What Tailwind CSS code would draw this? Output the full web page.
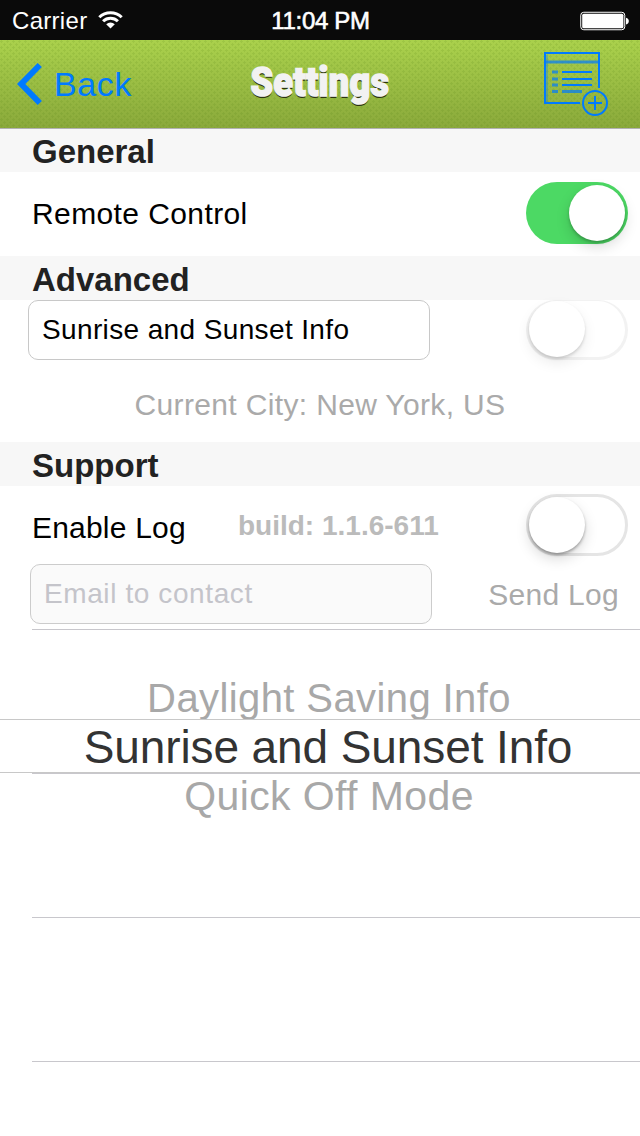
<!DOCTYPE html>
<html lang="en">
<head>
    <meta charset="UTF-8">
    <meta name="viewport" content="width=device-width, initial-scale=1.0">
    <title>Settings</title>
    <script src="https://cdn.jsdelivr.net/npm/@tailwindcss/browser@4"></script>
</head>
<body class="bg-white text-black font-['Liberation_Sans',Arial,sans-serif]">
    <div class="w-[640px] h-[1136px] overflow-hidden flex flex-col">
        <!-- Status bar -->
        <div class="h-10 shrink-0 bg-[#0a0a0a] text-white text-2xl leading-10 grid grid-cols-3 pl-3 pr-[11px]">
            <div class="flex items-center">
                <span class="tracking-[0.3px]">Carrier</span>
                <svg class="ml-[11px] -mt-px" width="25" height="18" viewBox="0 0 25 18" fill="none" stroke="#fff" stroke-width="3">
                    <path d="M1.3 6.2a16 16 0 0 1 22.4 0"/>
                    <path d="M5.1 10.2a10.5 10.5 0 0 1 14.8 0"/>
                    <path d="M8.2 13.3a6.1 6.1 0 0 1 8.6 0L12.5 17.6z" fill="#fff" stroke="none"/>
                </svg>
            </div>
            <span class="text-center pt-px tracking-[-0.3px] [-webkit-text-stroke:0.6px_white]">11:04 PM</span>
            <div class="flex items-center justify-end">
                <svg width="49" height="20" viewBox="0 0 49 20">
                    <rect x="0.75" y="1.25" width="44" height="17.5" rx="3" fill="none" stroke="#fff" stroke-width="1"/>
                    <rect x="2.2" y="2.7" width="41.2" height="14.6" rx="1.5" fill="#fff"/>
                    <path d="M46 6.7c2 .5 2.800 1.700 2.800 3.400s-.8 2.900-2.800 3.400z" fill="#fff"/>
                </svg>
            </div>
        </div>

        <!-- Navigation bar -->
        <header class="relative h-[88px] shrink-0 grid grid-cols-3 items-center pl-4 pr-8 bg-linear-to-b from-[#aad14c] to-[#8aa93b]">
            <svg class="absolute inset-0" width="640" height="88">
                <defs>
                    <pattern id="weave" width="6" height="6" patternUnits="userSpaceOnUse">
                        <path d="M0 1H3V2H0zM1 0H2V3H1zM3 4H6V5H3zM4 3H5V6H4z" fill="#4f7a10" fill-opacity="0.13"/>
                    </pattern>
                </defs>
                <rect width="640" height="88" fill="url(#weave)"/>
            </svg>
            <a href="#" class="relative flex items-center text-[#007aff]">
                <svg width="27" height="44" viewBox="0 0 27 44" fill="none" stroke="#007aff" stroke-width="6">
                    <path d="M23.800 3L5.200 22L23.800 41"/>
                </svg>
                <span class="ml-[11px] text-[34px] leading-10 tracking-[0.6px]">Back</span>
            </a>
            <h1 class="relative justify-self-center ml-4 -mt-1 text-[41px] leading-[48px] font-black font-['Roboto','Liberation_Sans',sans-serif] scale-x-[0.88] tracking-[0.3px] text-[#f2f2f2] [-webkit-text-stroke:1.6px_#f2f2f2] [text-shadow:0_2px_0_#2b3310]">Settings</h1>
            <svg class="relative justify-self-end" width="66" height="66" viewBox="0 0 66 66" fill="none" stroke="#007aff" stroke-width="2">
                <path d="M38 52H3V2H57V37"/>
                <path d="M3 11H57" stroke-width="3" stroke-opacity="0.7"/>
                <path d="M5 4V51" stroke-opacity="0.3"/>
                <path d="M20 21H50M20 28H50M20 34H50"/>
                <path d="M20 40.500H40" stroke-width="3" stroke-opacity="0.7"/>
                <path d="M10 21H16M10 28H16M10 34H16M10 40.500H16" stroke-width="3" stroke-opacity="0.7"/>
                <circle cx="53" cy="52" r="12"/>
                <path d="M53 45V59M46 52H60"/>
            </svg>
        </header>

        <main class="flex flex-col">
            <h2 class="h-11 bg-[#f7f7f7] border-t border-[#b2b2b2] pl-8 text-[33px] leading-[45px] font-bold text-[#222]">General</h2>
            <div class="h-[84px] pl-8 pr-3 flex items-center justify-between">
                <span class="-mt-0.5 text-[30px] tracking-[0.4px]">Remote Control</span>
                <button class="w-[102px] h-[62px] -mt-0.5 rounded-full bg-[#4cd964] flex items-center justify-end pr-[3px]" aria-label="Remote Control">
                    <span class="size-14 rounded-full bg-white shadow-[0_6px_14px_rgba(0,0,0,0.15),0_2px_3px_rgba(0,0,0,0.22)]"></span>
                </button>
            </div>

            <h2 class="h-11 bg-[#f7f7f7] pl-8 text-[33px] leading-[47px] font-bold text-[#222]">Advanced</h2>
            <div class="h-[142px]">
                <div class="h-15 pl-7 pr-3 flex justify-between">
                    <div class="w-[402px] h-15 border border-[#c8c8c8] rounded-[10px] pl-[13px] text-[28px] leading-[57px] tracking-[0.37px]">Sunrise and Sunset Info</div>
                    <button class="w-[102px] h-15 rounded-full border-[3px] border-t-1 border-[#f2f2f2] flex items-center" aria-label="Sunrise and Sunset Info">
                        <span class="size-14 shrink-0 rounded-full bg-white shadow-[0_6px_14px_rgba(0,0,0,0.08),0_2px_3px_rgba(0,0,0,0.15)]"></span>
                    </button>
                </div>
                <p class="mt-[27px] text-center text-[30px] leading-9 tracking-[0.35px] text-[#aaa]">Current City: New York, US</p>
            </div>

            <h2 class="h-11 bg-[#f7f7f7] pl-8 text-[33px] leading-[47px] font-bold text-[#222]">Support</h2>
            <div class="h-[78px] pl-8 pr-3 flex items-center">
                <span class="mt-1 w-[206px] text-[30px] tracking-[0.2px]">Enable Log</span>
                <span class="mt-0.5 text-[28px] font-bold text-[#bbb]">build: 1.1.6-611</span>
                <button class="ml-auto w-[102px] h-[62px] rounded-full border-[3px] border-[#e5e5e5] flex items-center" aria-label="Enable Log">
                    <span class="size-14 shrink-0 rounded-full bg-white shadow-[0_6px_14px_rgba(0,0,0,0.15),0_2px_3px_rgba(0,0,0,0.3)]"></span>
                </button>
            </div>
            <div class="h-[65px] pl-[30px] pr-[21px] flex justify-between">
                <div class="w-[402px] h-15 border border-[#ccc] rounded-[10px] bg-[#fafafa] pl-[13px] text-[28px] leading-[57px] tracking-[0.6px] text-[#c4c4ca]">Email to contact</div>
                <span class="text-[30px] leading-[61px] tracking-[0.3px] text-[#aaa]">Send Log</span>
            </div>
        </main>

        <!-- Picker over the empty table rows -->
        <section class="relative h-[507px] shrink-0">
            <div class="ml-8 h-36 border-t border-[#c8c7cc]"></div>
            <div class="ml-8 h-36 border-t border-[#c8c7cc]"></div>
            <div class="ml-8 h-36 border-t border-[#c8c7cc]"></div>
            <div class="ml-8 h-[75px] border-t border-[#c8c7cc]"></div>
            <div class="absolute inset-x-0 top-[46px] flex flex-col items-center whitespace-nowrap">
                <span class="h-11 pl-[18px] text-[40px] leading-[46px] tracking-[0.4px] text-[#a8a8a8]">Daylight Saving Info</span>
                <span class="w-full h-[54px] border-y border-[#c8c8c8] pl-4 text-center text-[46px] leading-[54px] tracking-[-0.1px] text-[#333]">Sunrise and Sunset Info</span>
                <span class="pl-[18px] text-[41px] leading-[46px] tracking-[0.4px] text-[#a8a8a8]">Quick Off Mode</span>
            </div>
        </section>
    </div>
</body>
</html>
